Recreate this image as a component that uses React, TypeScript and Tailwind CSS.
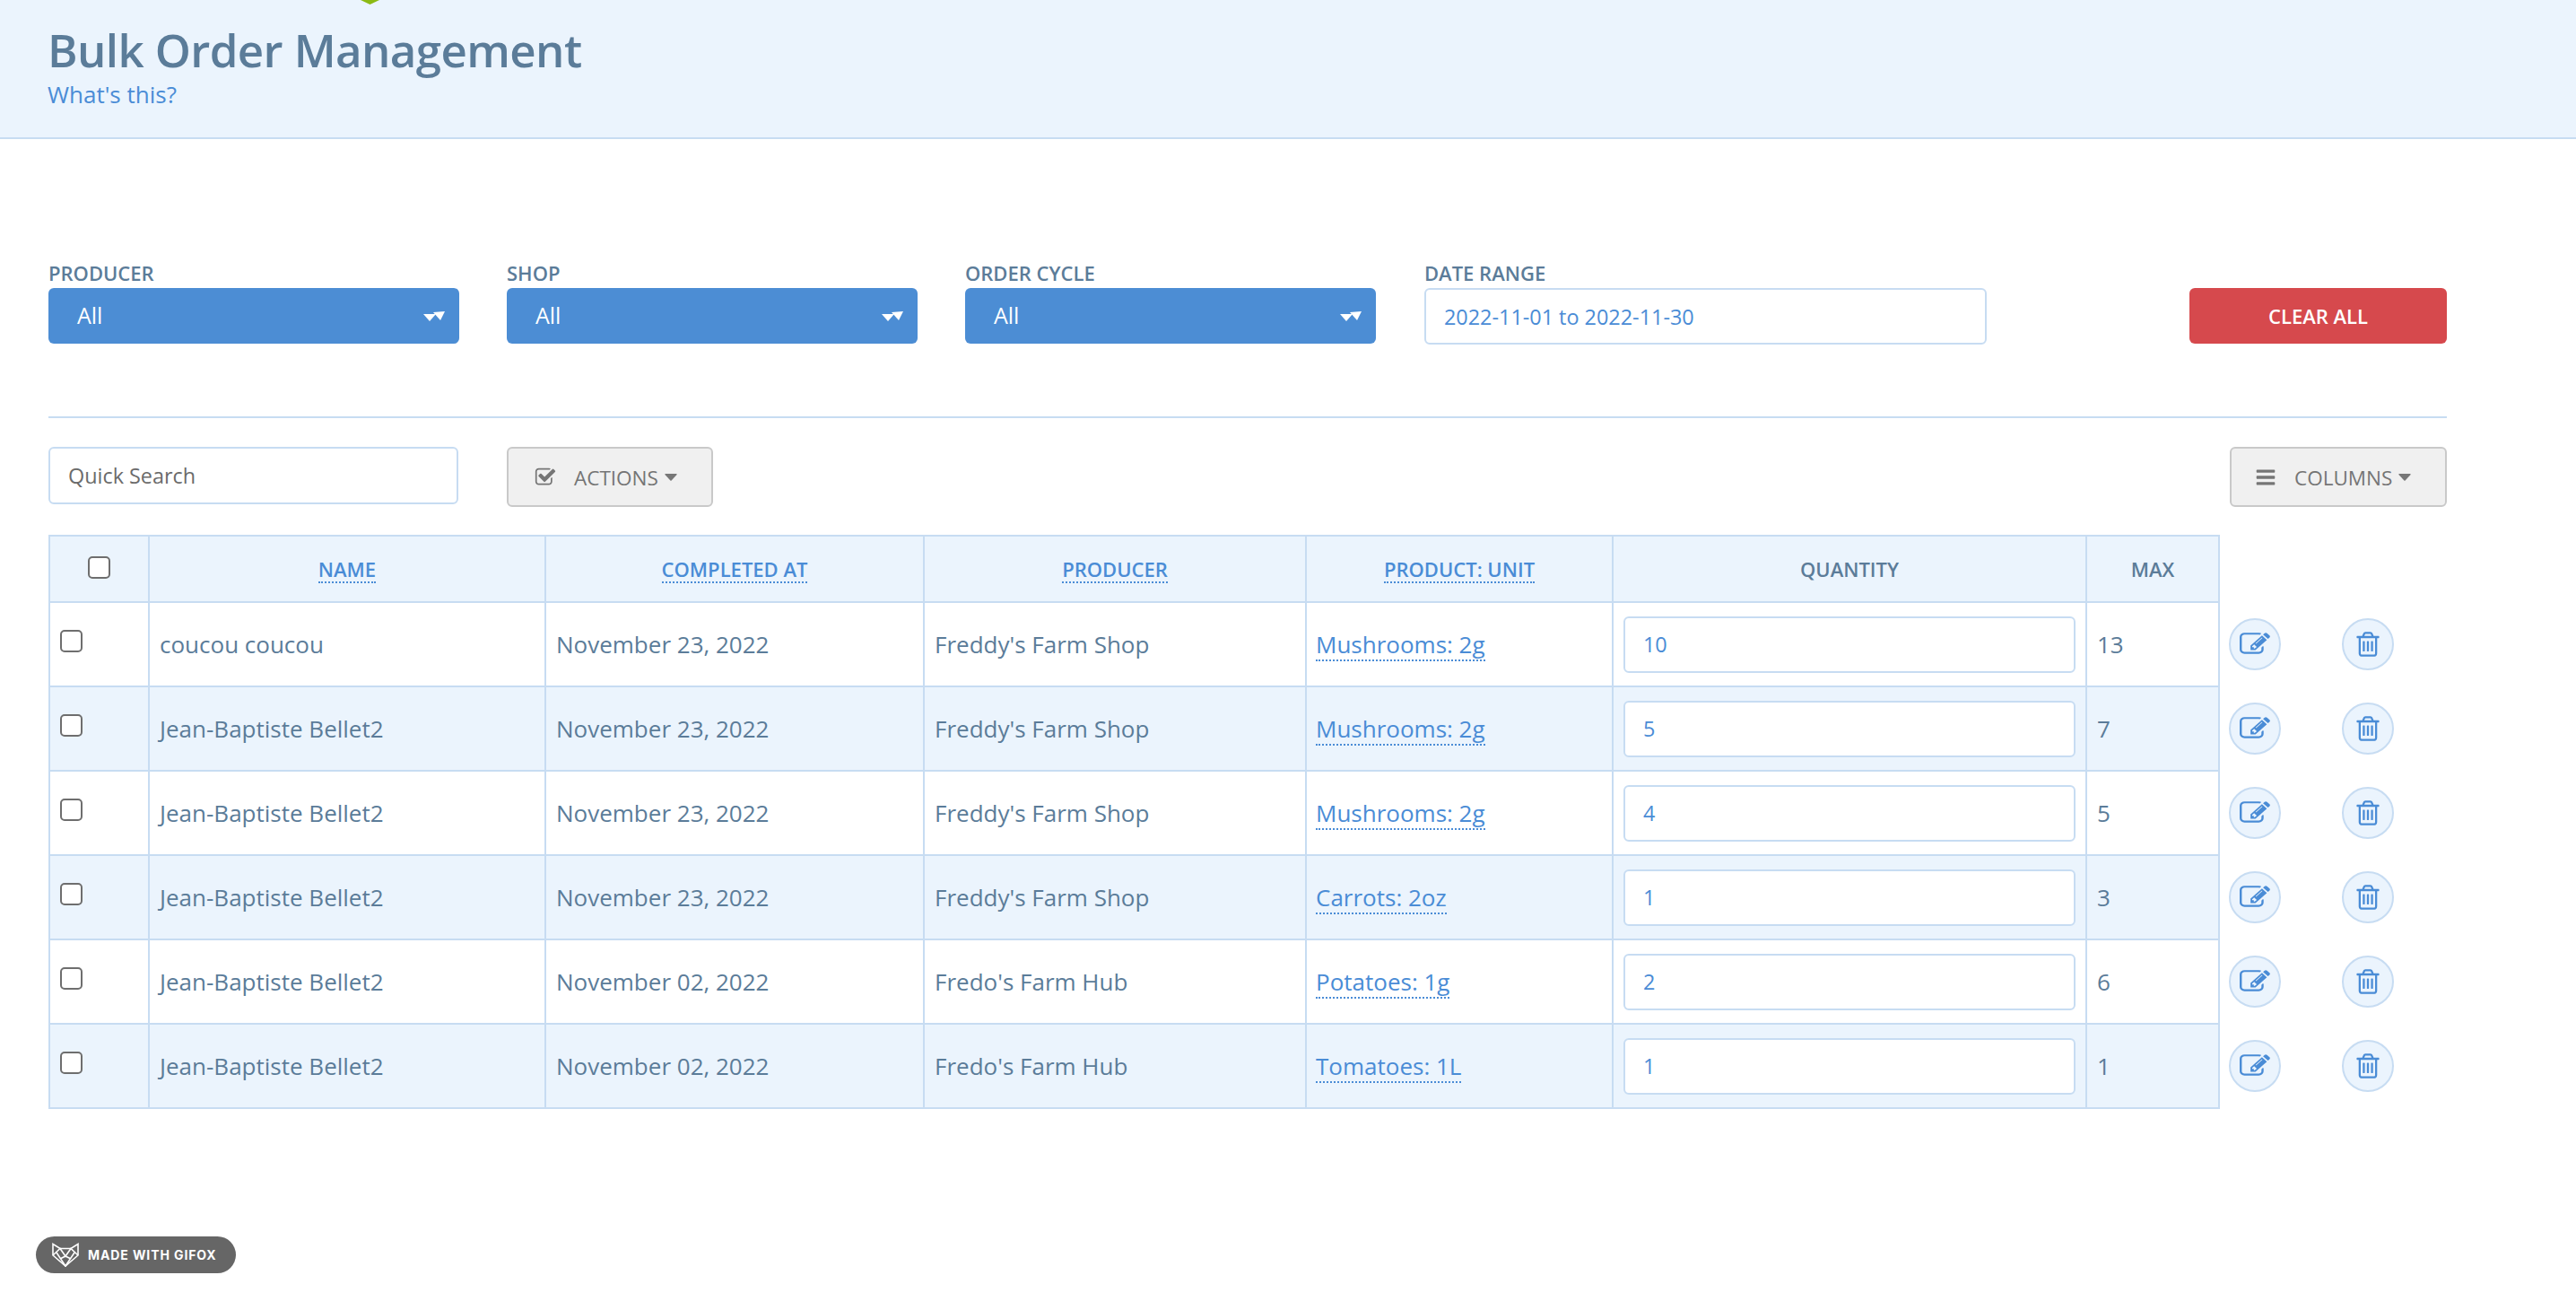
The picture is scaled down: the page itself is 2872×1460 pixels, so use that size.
import type { ReactNode } from 'react'

const rows = [
  { name: 'coucou coucou', date: 'November 23, 2022', producer: "Freddy's Farm Shop", product: 'Mushrooms: 2g', qty: '10', max: '13' },
  { name: 'Jean-Baptiste Bellet2', date: 'November 23, 2022', producer: "Freddy's Farm Shop", product: 'Mushrooms: 2g', qty: '5', max: '7' },
  { name: 'Jean-Baptiste Bellet2', date: 'November 23, 2022', producer: "Freddy's Farm Shop", product: 'Mushrooms: 2g', qty: '4', max: '5' },
  { name: 'Jean-Baptiste Bellet2', date: 'November 23, 2022', producer: "Freddy's Farm Shop", product: 'Carrots: 2oz', qty: '1', max: '3' },
  { name: 'Jean-Baptiste Bellet2', date: 'November 02, 2022', producer: "Fredo's Farm Hub", product: 'Potatoes: 1g', qty: '2', max: '6' },
  { name: 'Jean-Baptiste Bellet2', date: 'November 02, 2022', producer: "Fredo's Farm Hub", product: 'Tomatoes: 1L', qty: '1', max: '1' },
]

const filters = ['PRODUCER', 'SHOP', 'ORDER CYCLE']

function CaretDown() {
  return (
    <svg viewBox="0 0 14 8" className="w-[14px] h-[8px] fill-[#777] ml-[7px]">
      <path d="M1 0h12q1 0 .6 1L7.6 7.4q-.6.6-1.2 0L.4 1Q0 0 1 0z" />
    </svg>
  )
}

function SelectArrows() {
  return (
    <svg viewBox="0 0 24 11" className="w-[24px] h-[11px] fill-white">
      <polygon points="0,3 14,3 7,11" />
      <polygon points="11,1 24,0 19,10" />
    </svg>
  )
}

function FaIcon({ d, className }: { d: string; className: string }) {
  return (
    <svg viewBox="0 0 1792 1792" preserveAspectRatio="none" className={className}>
      <path d={d} />
    </svg>
  )
}

const editPath =
  'M888 1184l116-116-152-152-116 116v56h96v96h56zm440-720q-16-16-33 1l-350 350q-17 17-1 33t33-1l350-350q17-17 1-33zm80 594v190q0 119-84.5 203.5t-203.5 84.5h-832q-119 0-203.5-84.5t-84.5-203.5v-832q0-119 84.5-203.5t203.5-84.5h832q63 0 117 25 15 7 18 23 3 17-9 29l-49 49q-14 14-32 8-23-6-45-6h-832q-66 0-113 47t-47 113v832q0 66 47 113t113 47h832q66 0 113-47t47-113v-126q0-13 9-22l64-64q15-15 35-7t20 29zm-96-738l288 288-672 672h-288v-288zm444 132l-92 92-288-288 92-92q28-28 68-28t68 28l152 152q28 28 28 68t-28 68z'
const trashPath =
  'M704 736v576q0 14-9 23t-23 9h-64q-14 0-23-9t-9-23v-576q0-14 9-23t23-9h64q14 0 23 9t9 23zm256 0v576q0 14-9 23t-23 9h-64q-14 0-23-9t-9-23v-576q0-14 9-23t23-9h64q14 0 23 9t9 23zm256 0v576q0 14-9 23t-23 9h-64q-14 0-23-9t-9-23v-576q0-14 9-23t23-9h64q14 0 23 9t9 23zm128 724v-948h-896v948q0 22 7 40.5t14.5 27 10.5 8.5h832q3 0 10.5-8.5t14.5-27 7-40.5zm-672-1076h448l-48-117q-7-9-17-11h-317q-10 2-17 11zm928 32v64q0 14-9 23t-23 9h-96v948q0 83-47 143.5t-113 60.5h-832q-66 0-113-58.5t-47-141.5v-952h-96q-14 0-23-9t-9-23v-64q0-14 9-23t23-9h309l70-167q15-37 54-63t79-26h320q40 0 79 26t54 63l70 167h309q14 0 23 9t9 23z'
const checkPath =
  'M1472 930v318q0 119-84.5 203.5t-203.5 84.5h-832q-119 0-203.5-84.5t-84.5-203.5v-832q0-119 84.5-203.5t203.5-84.5h832q63 0 117 25 15 7 18 23 3 17-9 29l-49 49q-10 10-23 10-3 0-9-2-23-6-45-6h-832q-66 0-113 47t-47 113v832q0 66 47 113t113 47h832q66 0 113-47t47-113v-254q0-13 9-22l64-64q10-10 23-10 6 0 12 3 20 8 20 29zm231-489l-814 814q-24 24-57 24t-57-24l-430-430q-24-24-24-57t24-57l110-110q24-24 57-24t57 24l263 263 647-647q24-24 57-24t57 24l110 110q24 24 24 57t-24 57z'
const barsPath =
  'M1664 1344v128q0 26-19 45t-45 19h-1408q-26 0-45-19t-19-45v-128q0-26 19-45t45-19h1408q26 0 45 19t19 45zm0-512v128q0 26-19 45t-45 19h-1408q-26 0-45-19t-19-45v-128q0-26 19-45t45-19h1408q26 0 45 19t19 45zm0-512v128q0 26-19 45t-45 19h-1408q-26 0-45-19t-19-45v-128q0-26 19-45t45-19h1408q26 0 45 19t19 45z'

function Checkbox() {
  return <input type="checkbox" className="appearance-none block w-[25px] h-[25px] bg-white border-2 border-[#6e6e6e] rounded-[5px]" />
}

function RoundButton({ children }: { children: ReactNode }) {
  return (
    <button className="w-[58px] h-[58px] rounded-full bg-[#ebf4fd] border-2 border-[#c7dcf2] flex items-center justify-center">
      {children}
    </button>
  )
}

function GreyButton({ icon, label, className }: { icon: ReactNode; label: string; className: string }) {
  return (
    <button className={`h-[67px] bg-[#f0f0f0] border-2 border-[#c9c9c9] rounded-[6px] flex items-center text-[22.5px] text-[#757575] ${className}`}>
      {icon}
      <span className="pt-[2px]">{label}</span>
      <CaretDown />
    </button>
  )
}

export default function App() {
  const th = 'border-2 border-[#c7dcf2] bg-[#ebf4fd] text-[22px] font-semibold text-center h-[74px] p-0'
  const sortLink = 'text-[#4a8cd6] border-b-2 border-dotted border-[#4a8cd6] leading-[28px] inline-block'

  return (
    <div className="relative min-h-[1460px] bg-white overflow-hidden font-['Open_Sans',sans-serif] text-[#5b7c99]">
      <div className="absolute left-[402px] top-0 z-10 w-[21px] h-[5px] bg-[#8cba14] [clip-path:polygon(0_0,100%_0,50%_100%)]" />

      <header className="h-[155px] bg-[#ebf4fd] border-b-2 border-[#c7dcf2] pl-[53px] pt-[25px]">
        <h1 className="text-[51px] leading-[60px] font-semibold tracking-[-0.6px]">Bulk Order Management</h1>
        <a className="block mt-[2px] text-[26px] leading-[36px] text-[#4a8cd6]">What's this?</a>
      </header>

      <main className="px-[54px] w-[2782px]">
        <section className="mt-[134px] flex items-start">
          {filters.map((f) => (
            <div key={f} className="w-[458px] mr-[53px]">
              <label className="block text-[22px] leading-[30px] mb-[2px] font-semibold">{f}</label>
              <div className="h-[62px] rounded-[6px] bg-[#4c8dd4] text-white text-[25px] pl-[32px] pr-[16px] flex items-center justify-between">
                <span>All</span>
                <SelectArrows />
              </div>
            </div>
          ))}
          <div className="w-[627px] ml-[1px]">
            <label className="block text-[22px] leading-[30px] mb-[2px] font-semibold">DATE RANGE</label>
            <input
              readOnly
              value="2022-11-01 to 2022-11-30"
              className="block w-full h-[63px] bg-white border-2 border-[#c7dcf2] rounded-[6px] pl-[20px] text-[23.4px] text-[#4a8cd6] outline-none"
            />
          </div>
          <button className="ml-auto mt-[32px] w-[287px] h-[62px] rounded-[6px] bg-[#d6494d] text-white text-[22px] font-semibold">
            CLEAR ALL
          </button>
        </section>

        <hr className="mt-[80px] border-0 h-[2px] bg-[#c7dcf2]" />

        <section className="mt-[32px] flex items-start">
          <input
            readOnly
            placeholder="Quick Search"
            className="w-[457px] h-[64px] bg-white border-2 border-[#c7dcf2] rounded-[6px] pl-[20px] text-[23.4px] placeholder:text-[#6b6b6b] outline-none"
          />
          <GreyButton
            className="ml-[54px] w-[230px] pl-[29px]"
            label="ACTIONS"
            icon={<FaIcon d={checkPath} className="w-[24px] h-[24px] fill-[#757575] mr-[20px]" />}
          />
          <div className="ml-auto">
            <GreyButton
              className="w-[242px] pl-[26px]"
              label="COLUMNS"
              icon={<FaIcon d={barsPath} className="w-[24px] h-[24px] fill-[#757575] mr-[20px]" />}
            />
          </div>
        </section>

        <table className="mt-[31px] table-fixed border-collapse w-[2674px] text-[26px]">
          <colgroup>
            <col className="w-[111px]" />
            <col className="w-[442px]" />
            <col className="w-[422px]" />
            <col className="w-[426px]" />
            <col className="w-[342px]" />
            <col className="w-[528px]" />
            <col className="w-[148px]" />
            <col className="w-[127px]" />
            <col className="w-[128px]" />
          </colgroup>
          <thead>
            <tr>
              <th className={th}>
                <div className="flex justify-center -mt-[4px]">
                  <Checkbox />
                </div>
              </th>
              <th className={th}><span className={sortLink}>NAME</span></th>
              <th className={th}><span className={sortLink}>COMPLETED AT</span></th>
              <th className={th}><span className={sortLink}>PRODUCER</span></th>
              <th className={th}><span className={sortLink}>PRODUCT: UNIT</span></th>
              <th className={th}>QUANTITY</th>
              <th className={th}>MAX</th>
              <th />
              <th />
            </tr>
          </thead>
          <tbody>
            {rows.map((r, i) => {
              const bg = i % 2 === 0 ? 'bg-white' : 'bg-[#ebf4fd]'
              const td = `border-2 border-[#c7dcf2] h-[94px] px-[11px] py-0 ${bg}`
              return (
                <tr key={i}>
                  <td className={td}>
                    <div className="-mt-[7px]">
                      <Checkbox />
                    </div>
                  </td>
                  <td className={td}>{r.name}</td>
                  <td className={td}>{r.date}</td>
                  <td className={td}>{r.producer}</td>
                  <td className={`${td} pl-[10px]`}>
                    <a className="inline-block text-[#4a8cd6] border-b-2 border-dotted border-[#4a8cd6] leading-[34px]">{r.product}</a>
                  </td>
                  <td className={td}>
                    <input
                      readOnly
                      value={r.qty}
                      className="block w-full h-[63px] bg-white border-2 border-[#c7dcf2] rounded-[6px] pl-[20px] text-[23.4px] text-[#4a8cd6] outline-none"
                    />
                  </td>
                  <td className={td}>{r.max}</td>
                  <td className="pl-[10px] p-0">
                    <RoundButton>
                      <FaIcon d={editPath} className="w-[34px] h-[30px] fill-[#4a8cd6]" />
                    </RoundButton>
                  </td>
                  <td className="pl-[10px] p-0">
                    <RoundButton>
                      <FaIcon d={trashPath} className="w-[32px] h-[32px] fill-[#4a8cd6]" />
                    </RoundButton>
                  </td>
                </tr>
              )
            })}
          </tbody>
        </table>
      </main>

      <div className="absolute left-[40px] top-[1378px] h-[41px] w-[223px] rounded-full bg-[#666] flex items-center pl-[18px]">
        <svg viewBox="0 0 30 27" className="w-[30px] h-[27px] fill-none stroke-white stroke-[1.6] mr-[10px]">
          <path d="M1 1.5 9 6.5 H21 L29 1.5 V14 L15 26 1 14 Z" />
          <path d="M1 14 9 6.5 15 15 21 6.5 29 14 M5 11 15 26 25 11 M9 18 15 15 21 18" />
        </svg>
        <span className="text-[14px] font-bold tracking-[0.9px] text-white font-['Inter',sans-serif] whitespace-nowrap">MADE WITH GIFOX</span>
      </div>
    </div>
  )
}
